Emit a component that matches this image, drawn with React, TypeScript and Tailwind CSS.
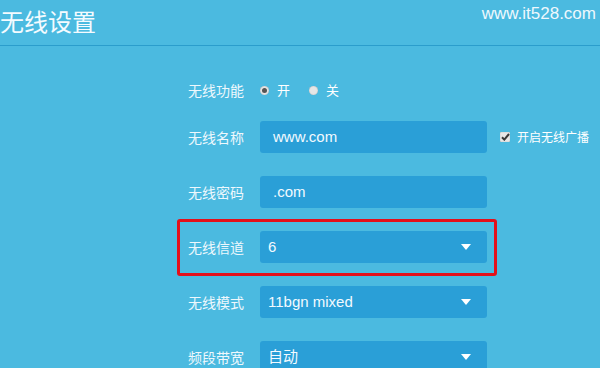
const cjk = { fontFamily: '"Microsoft YaHei", "Noto Sans CJK SC", sans-serif' };
const latin = { fontFamily: '"Liberation Sans", "Noto Sans CJK SC", sans-serif' };

function Radio({ checked, label }: { checked?: boolean; label: string }) {
  return (
    <label className="flex items-center gap-[8px]">
      <span className="flex h-[9px] w-[9px] items-center justify-center rounded-full bg-[#e6e6e6] shadow-[inset_0_0_1px_#999]">
        {checked && <span className="h-[5px] w-[5px] rounded-full bg-[#555]" />}
      </span>
      <span className="text-[13px] text-white" style={cjk}>
        {label}
      </span>
    </label>
  );
}

function Arrow() {
  return (
    <svg width="10" height="6" viewBox="0 0 10 6" className="ml-auto mr-[16px]">
      <path d="M0 0h10L5 6z" fill="#fff" />
    </svg>
  );
}

function Row({ label, children }: { label: string; children: React.ReactNode }) {
  return (
    <div className="flex h-[32px] items-center">
      <span className="w-[72px] text-[14px] text-[#eef8fd]" style={cjk}>
        {label}
      </span>
      {children}
    </div>
  );
}

function Field({ value, select, pad = 'pl-[13px]' }: { value: string; select?: boolean; pad?: string }) {
  return (
    <div className={`flex h-[32px] w-[227px] items-center rounded-[3px] bg-[#2a9fd7] ${pad}`}>
      <span className="text-[15px] text-[#f2faff]" style={latin}>
        {value}
      </span>
      {select && <Arrow />}
    </div>
  );
}

export default function App() {
  return (
    <div className="h-[368px] w-[600px] overflow-hidden bg-[#4bbae0]">
      <div className="flex h-[46px] items-start justify-between border-b border-[#2b9dcc]">
        <h1 className="mt-[6px] text-[24px] leading-[30px] text-[#f4fbff]" style={cjk}>
          无线设置
        </h1>
        <span className="mr-[4px] mt-[1px] text-[17px] text-[#eef8fd]" style={latin}>
          www.it528.com
        </span>
      </div>

      <div className="ml-[188px] flex flex-col">
        <div className="mt-[34px] flex h-[20px] items-center">
          <span className="w-[72px] text-[14px] text-[#eef8fd]" style={cjk}>
            无线功能
          </span>
          <div className="flex items-center gap-[19px]">
            <Radio checked label="开" />
            <Radio label="关" />
          </div>
        </div>

        <div className="mt-[21px] flex items-center">
          <Row label="无线名称">
            <Field value="www.com" />
          </Row>
          <label className="ml-[13px] flex items-center gap-[7px]">
            <span className="flex h-[10px] w-[10px] items-center justify-center rounded-[1px] bg-[#e8e8e8] shadow-[inset_0_0_1px_#888]">
              <svg width="9" height="8" viewBox="0 0 9 8">
                <path d="M1 4.2l2.3 2.4L8 1" stroke="#3a3a3a" strokeWidth="2" fill="none" />
              </svg>
            </span>
            <span className="text-[12px] text-white" style={cjk}>
              开启无线广播
            </span>
          </label>
        </div>

        <div className="mt-[23px]">
          <Row label="无线密码">
            <Field value=".com" />
          </Row>
        </div>

        <div className="relative mt-[23px]">
          <Row label="无线信道">
            <Field value="6" select pad="pl-[8px]" />
          </Row>
          <div className="pointer-events-none absolute -left-[11px] -top-[12px] h-[57px] w-[320px] rounded-[3px] border-[3px] border-[#e3101a]" />
        </div>

        <div className="mt-[23px]">
          <Row label="无线模式">
            <Field value="11bgn mixed" select pad="pl-[8px]" />
          </Row>
        </div>

        <div className="mt-[23px]">
          <Row label="频段带宽">
            <Field value="自动" select pad="pl-[8px]" />
          </Row>
        </div>
      </div>
    </div>
  );
}
